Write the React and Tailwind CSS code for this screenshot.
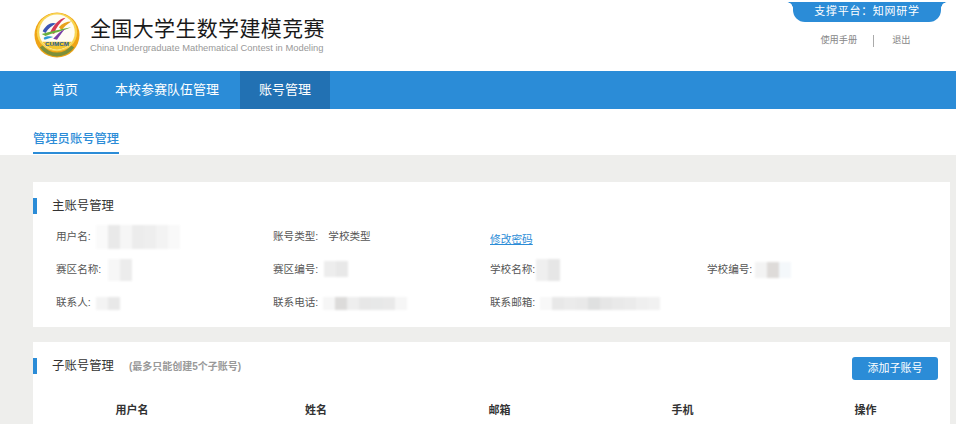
import React from 'react';

function Logo() {
  return (
    <svg width="48" height="46" viewBox="0 0 48 48" className="shrink-0">
      <ellipse cx="24" cy="24" rx="23.5" ry="23.5" fill="#efa416" />
      <ellipse cx="24" cy="21" rx="21" ry="20" fill="#f8d552" />
      <circle cx="24" cy="21" r="18.5" fill="#fffdf4" />
      <path d="M8.5 31 A 18.5 18.5 0 0 0 39.5 31 Z" fill="#f3c62f" />
      <path d="M9 35 A 19 19 0 0 0 39 35 L 42 37 A 22 22 0 0 1 6 37 Z" fill="#7c8f3a" />
      <path d="M9 20 C 13 13 18 10 23 12 C 19 14 15 17 12 22 Z" fill="#3a55b5" />
      <path d="M17 21 C 21 13 26 7 33 6 C 27 11 23 16 21 23 Z" fill="#d43a55" />
      <path d="M26 16 C 29 12 34 10 39 10 C 34 13 31 16 29 19 Z" fill="#e8a21c" />
      <path d="M8 23 C 16 21 28 18 39 16 C 30 20 20 22 12 25 Z" fill="#6aae3c" />
      <path d="M20 28 C 24 24 27 20 32 18 C 28 23 26 26 24 29 Z" fill="#7a3fa8" />
      <path d="M10 27 C 13 25 17 25 20 26 C 17 27 13 28 11 29 Z" fill="#2f9ad4" />
      <text x="24" y="35" textAnchor="middle" fontFamily="Liberation Sans, sans-serif" fontSize="6.5" fontWeight="700" fill="#1d5f9e">CUMCM</text>
    </svg>
  );
}

// blurred-out value from the screenshot, shades are the mosaic blocks
function Mosaic({ shades, className }) {
  return (
    <span className={`inline-flex items-stretch blur-[1px] ${className}`}>
      {shades.map((s, i) => (
        <span key={i} className="w-[12px]" style={{ backgroundColor: s }} />
      ))}
    </span>
  );
}

function SectionTitle({ children }) {
  return (
    <div className="flex items-center gap-[15px]">
      <div className="w-1 h-4 bg-[#2b8cd7]" />
      {children}
    </div>
  );
}

function Field({ label, value, shades, mosaicClass }) {
  return (
    <div className="flex items-center h-[24px] text-[10.6px] text-[#555]">
      <span>{label}</span>
      {value && <span className="ml-[10px]">{value}</span>}
      {shades && <Mosaic shades={shades} className={mosaicClass} />}
    </div>
  );
}

export default function App() {
  return (
    <div className="w-[956px] h-[424px] overflow-hidden bg-[#eeeeec] font-['Liberation_Sans','Noto_Sans_CJK_SC',sans-serif]">
      <header className="h-[71px] bg-white flex justify-between">
        <div className="flex items-start pl-[33px] pt-[12px] gap-[9px]">
          <Logo />
          <div className="pt-[4px]">
            <h1 className="text-[21px] leading-[26px] tracking-[0.35px] text-[#1a1a1a]">全国大学生数学建模竞赛</h1>
            <p className="text-[9.4px] leading-[12px] text-[#999]">China Undergraduate Mathematical Contest in Modeling</p>
          </div>
        </div>
        <div className="w-[156px] mr-[11px] flex flex-col items-center">
          <div className="relative w-[148px] h-[20px] mt-[2px] bg-[#2b8cd7] rounded-b-[12px] text-white text-[11px] leading-[19px] text-center tracking-[0.7px]">
            <span className="absolute -left-[6px] top-0 w-[6px] h-[6px] bg-[radial-gradient(circle_at_0_100%,transparent_5.5px,#2b8cd7_6px)]" />
            <span className="absolute -right-[6px] top-0 w-[6px] h-[6px] bg-[radial-gradient(circle_at_100%_100%,transparent_5.5px,#2b8cd7_6px)]" />
            支撑平台：知网研学
          </div>
          <div className="flex items-center mt-[12px] mr-[3px] text-[9.2px] leading-[13px] text-[#888]">
            <span>使用手册</span>
            <span className="w-px h-3 bg-[#aaa] mx-[16px]" />
            <span className="ml-[2px]">退出</span>
          </div>
        </div>
      </header>

      <nav className="h-[38px] bg-[#2b8cd7] flex text-white text-[13px] leading-[38px] pl-[36px]">
        <span className="px-[16px]">首页</span>
        <span className="px-[16px] ml-[5px]">本校参赛队伍管理</span>
        <span className="w-[90px] text-center ml-[5px] bg-[#2271b3]">账号管理</span>
      </nav>

      <div className="h-[46px] bg-white pl-[33px]">
        <div className="inline-block h-[45px] pt-[21px] text-[12.3px] leading-[18px] font-medium text-[#2b8cd7] border-b-[2px] border-[#2b8cd7]">
          管理员账号管理
        </div>
      </div>

      <main className="pl-[33px] pr-[6px] pt-[27px] flex flex-col gap-[15px]">
        <section className="h-[145px] bg-white pt-[15px]">
          <SectionTitle>
            <h2 className="text-[12.4px] leading-4 pt-[1px] text-[#333]">主账号管理</h2>
          </SectionTitle>
          <div className="mt-[11px] ml-[23px] grid grid-cols-[217px_217px_217px_217px] gap-y-[9px]">
            <Field label="用户名:" mosaicClass="ml-[5px] h-[24px]" shades={['#fafafa', '#e9e9e9', '#f6f6f6', '#ececec', '#eeeeee', '#f3f3f3', '#f9f9f9']} />
            <Field label="账号类型:" value="学校类型" />
            <div className="flex items-center h-[24px] pt-[4px] text-[10.7px]">
              <span className="text-[#2b8cd7] underline">修改密码</span>
            </div>
            <div />
            <Field label="赛区名称:" mosaicClass="ml-[7px] h-[22px]" shades={['#f7f7f7', '#ececec']} />
            <Field label="赛区编号:" mosaicClass="ml-[6px] h-[16px] -mt-[3px]" shades={['#ededed', '#e8e8e8']} />
            <Field label="学校名称:" mosaicClass="ml-[1px] h-[22px]" shades={['#efefef', '#e6e6e6']} />
            <Field label="学校编号:" mosaicClass="ml-[3px] h-[16px]" shades={['#f3f3f3', '#dedbd9', '#f4f8fb']} />
            <Field label="联系人:" mosaicClass="ml-[5px] h-[13px]" shades={['#f3f3f3', '#e8e8e8']} />
            <Field label="联系电话:" mosaicClass="ml-[5px] h-[13px]" shades={['#f6f6f6', '#dcdbda', '#eeeeee', '#e7e7e7', '#e7e8e8', '#e9e9e9', '#f6f6f6']} />
            <Field label="联系邮箱:" mosaicClass="ml-[5px] h-[13px]" shades={['#f8f8f8', '#e8e8e8', '#ebebeb', '#e9e9e9', '#dfe0e0', '#e6e6e6', '#e9e9e9', '#ebebeb', '#efefef', '#f1f1f1']} />
          </div>
        </section>

        <section className="h-[120px] bg-white pt-[15px]">
          <div className="flex items-start justify-between pr-[12px]">
            <SectionTitle>
              <div className="flex items-baseline gap-[15px]">
                <h2 className="text-[12.4px] leading-4 pt-[1px] text-[#333]">子账号管理</h2>
                <span className="text-[10px] font-bold text-[#999]">(最多只能创建5个子账号)</span>
              </div>
            </SectionTitle>
            <button className="w-[86px] h-[23px] bg-[#2b8cd7] text-white text-[11px] rounded-[3px]">添加子账号</button>
          </div>
          <div className="mt-[22px] pl-[7px] grid grid-cols-[184px_184px_183px_183px_183px] text-[11px] font-bold text-[#333] text-center">
            <span>用户名</span>
            <span>姓名</span>
            <span>邮箱</span>
            <span>手机</span>
            <span>操作</span>
          </div>
        </section>
      </main>
    </div>
  );
}
